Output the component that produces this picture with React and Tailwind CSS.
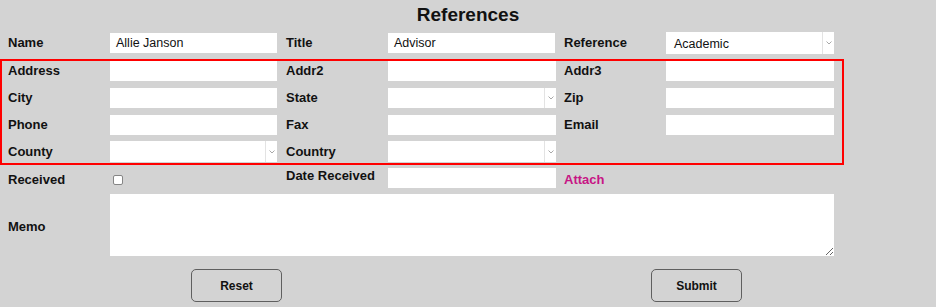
import React from "react";

const labelCls = "w-[102px] shrink-0 text-[13px] font-bold text-[#111]";

function TextBox({ value = "", w = "w-[167px]", h = "h-[20px]" }) {
  return (
    <div className={`${w} ${h} bg-white flex items-center pl-[6px] text-[12.5px] text-[#111]`}>
      {value}
    </div>
  );
}

function Select({ value = "", w = "w-[167px]", h = "h-[21px]" }) {
  return (
    <div className={`${w} ${h} bg-white flex items-stretch text-[12.5px] text-[#111]`}>
      <div className="flex-1 flex items-center pl-[8px] pt-[2px]">{value}</div>
      <div className="w-[12px] border-l border-[#e3e3e3] flex items-center justify-center">
        <svg width="6" height="4" viewBox="0 0 6 4">
          <path d="M0.5 0.5 L3 3 L5.5 0.5" fill="none" stroke="#a8a8a8" strokeWidth="1" />
        </svg>
      </div>
    </div>
  );
}

function Field({ label, children, last }) {
  return (
    <div className={`flex items-center ${last ? "" : "w-[278px]"}`}>
      <div className={labelCls}>{label}</div>
      {children}
    </div>
  );
}

export default function App() {
  return (
    <div
      className="w-[936px] h-[307px] bg-[#d3d3d3] overflow-hidden"
      style={{ fontFamily: '"Liberation Sans", Arial, sans-serif' }}
    >
      <h1 className="h-[32px] pt-[2px] text-center text-[19px] leading-[26px] font-bold text-[#111]">
        References
      </h1>

      <div className="flex items-center h-[22px] pl-[8px]">
        <Field label="Name"><TextBox value="Allie Janson" /></Field>
        <Field label="Title"><TextBox value="Advisor" /></Field>
        <Field label="Reference" last><Select value="Academic" w="w-[168px]" h="h-[22px]" /></Field>
      </div>

      <div className="mt-[5px] w-[844px] border-2 border-[#ff0000] pl-[6px] pb-[1px] flex flex-col">
        <div className="flex items-center">
          <Field label="Address"><TextBox /></Field>
          <Field label="Addr2"><TextBox w="w-[168px]" /></Field>
          <Field label="Addr3" last><TextBox w="w-[168px]" /></Field>
        </div>
        <div className="flex items-center mt-[7px]">
          <Field label="City"><TextBox /></Field>
          <Field label="State"><Select w="w-[168px]" h="h-[20px]" /></Field>
          <Field label="Zip" last><TextBox w="w-[168px]" /></Field>
        </div>
        <div className="flex items-center mt-[7px]">
          <Field label="Phone"><TextBox /></Field>
          <Field label="Fax"><TextBox w="w-[168px]" /></Field>
          <Field label="Email" last><TextBox w="w-[168px]" /></Field>
        </div>
        <div className="flex items-center mt-[6px]">
          <Field label="County"><Select /></Field>
          <Field label="Country"><Select w="w-[168px]" /></Field>
        </div>
      </div>

      <div className="flex items-center h-[20px] mt-[3px] pl-[8px]">
        <div className="flex items-center w-[278px]">
          <div className={`${labelCls} pt-[4px]`}>Received</div>
          <input
            type="checkbox"
            className="appearance-none w-[10px] h-[10px] m-0 ml-[3px] mt-[4px] bg-white border border-[#858585] rounded-[2px]"
          />
        </div>
        <div className="flex items-center w-[278px]">
          <div className={`${labelCls} -mt-[4px]`}>Date Received</div>
          <TextBox w="w-[168px]" />
        </div>
        <div className="text-[13px] font-bold text-[#c71585] pt-[3px]">Attach</div>
      </div>

      <div className="flex items-center mt-[6px] pl-[8px]">
        <div className={`${labelCls} pt-[3px]`}>Memo</div>
        <textarea className="w-[724px] h-[62px] bg-white border-0 outline-none p-[4px] text-[12.5px]" />
      </div>

      <div className="flex mt-[13px] pl-[191px] gap-[369px]">
        <button className="w-[91px] h-[33px] rounded-[5px] border border-[#5f5f5f] bg-transparent text-[12px] font-bold text-[#111]">
          Reset
        </button>
        <button className="w-[91px] h-[33px] rounded-[5px] border border-[#5f5f5f] bg-transparent text-[12px] font-bold text-[#111]">
          Submit
        </button>
      </div>
    </div>
  );
}
